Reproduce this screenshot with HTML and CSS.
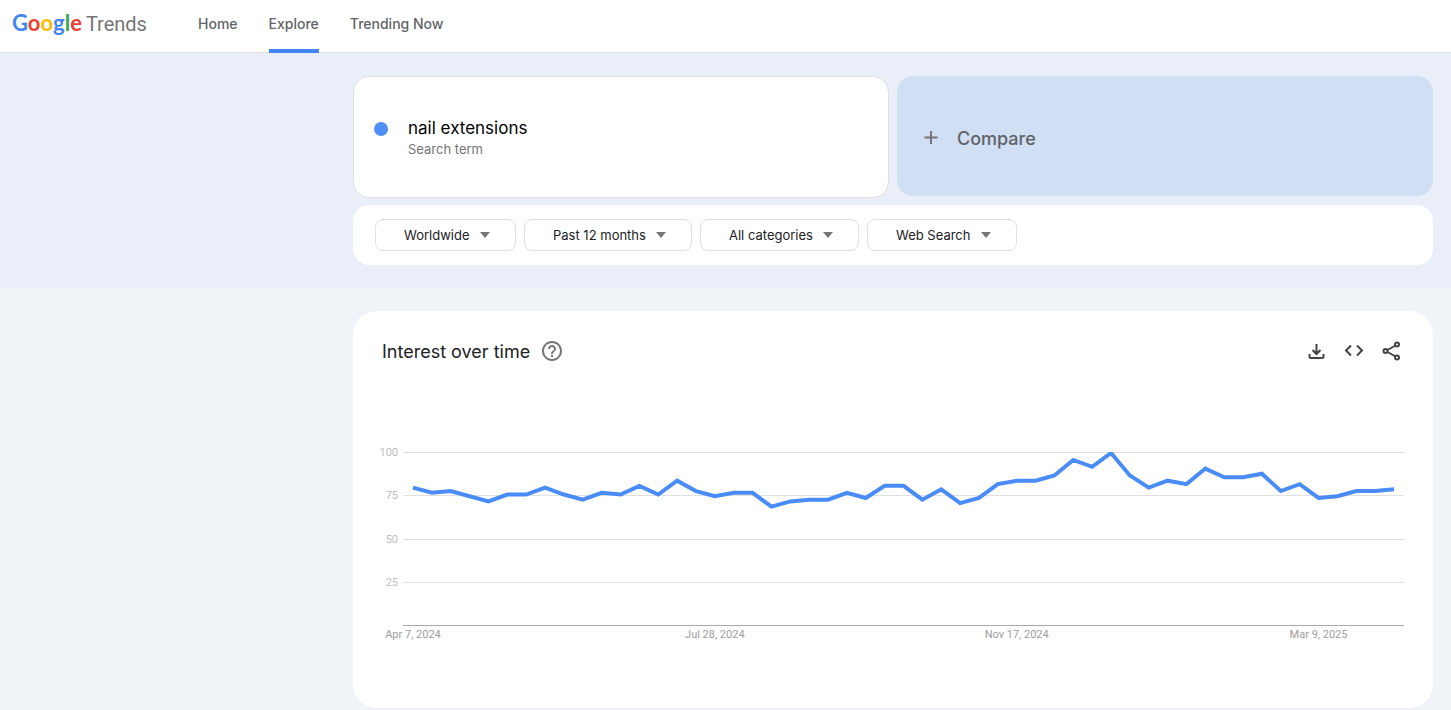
FILE: index.html
```html
<!DOCTYPE html>
<html lang="en">
<head>
  <meta charset="UTF-8">
  <meta name="viewport" content="width=device-width, initial-scale=1.0">
  <title>nail extensions - Explore - Google Trends</title>
  <link rel="stylesheet" href="styles.css">
</head>
<body>
  <header class="topbar">
    <a class="logo" href="#" aria-label="Google Trends">
      <span class="google"><span class="blue">G</span><span class="red">o</span><span class="yellow">o</span><span class="blue">g</span><span class="green">l</span><span class="red">e</span></span>
      <span class="trends">Trends</span>
    </a>
    <nav class="nav">
      <a href="#">Home</a>
      <a href="#" class="active">Explore</a>
      <a href="#">Trending Now</a>
    </nav>
  </header>

  <section class="hero">
    <div class="terms">
      <div class="term">
        <span class="dot"></span>
        <div>
          <div class="term-name">nail extensions</div>
          <div class="term-type">Search term</div>
        </div>
      </div>
      <button type="button" class="compare">
        <svg width="14" height="14" viewBox="0 0 14 14"><path d="M7 0v13M0.500 6.500h13" stroke="#757575" stroke-width="2"/></svg>
        Compare
      </button>
    </div>
    <div class="filters">
      <div class="filter">
        <select aria-label="Location"><option>Worldwide</option></select>
      </div>
      <div class="filter">
        <select aria-label="Time range"><option>Past 12 months</option></select>
      </div>
      <div class="filter">
        <select aria-label="Category"><option>All categories</option></select>
      </div>
      <div class="filter">
        <select aria-label="Search type"><option>Web Search</option></select>
      </div>
    </div>
  </section>

  <main class="content">
    <section class="card">
      <div class="card-header">
        <h2>Interest over time</h2>
        <button type="button" class="icon-btn help" aria-label="Help">
          <svg width="24" height="24" viewBox="0 0 24 24" fill="#757575"><path d="M11 18h2v-2h-2v2zm1-16C6.480 2 2 6.480 2 12s4.480 10 10 10 10-4.480 10-10S17.520 2 12 2zm0 18c-4.410 0-8-3.590-8-8s3.590-8 8-8 8 3.590 8 8-3.590 8-8 8zm0-14c-2.210 0-4 1.790-4 4h2c0-1.100.9-2 2-2s2 .9 2 2c0 2-3 1.750-3 5h2c0-2.250 3-2.500 3-5 0-2.210-1.790-4-4-4z"/></svg>
        </button>
        <div class="actions">
          <button type="button" class="icon-btn" aria-label="Download CSV">
            <svg width="24" height="24" viewBox="0 0 24 24" fill="none" stroke="#444" stroke-width="2"><path d="M12.500 5v10M8.500 11l4 4 4-4M5.500 15v2.500q0 1.500 1.500 1.500h11q1.500 0 1.500-1.500V15"/></svg>
          </button>
          <button type="button" class="icon-btn" aria-label="Embed">
            <svg width="24" height="24" viewBox="0 0 24 24" fill="none" stroke="#444" stroke-width="2"><path d="M9 6.500L4 11.500l5 5M15 6.500l5 5-5 5"/></svg>
          </button>
          <button type="button" class="icon-btn" aria-label="Share">
            <svg width="24" height="24" viewBox="0 0 24 24" fill="none" stroke="#444" stroke-width="2"><circle cx="5.500" cy="12" r="2"/><circle cx="17" cy="5.500" r="2"/><circle cx="17" cy="18.500" r="2"/><path d="M7.500 11l8-4.500M7.500 13l8 4.500"/></svg>
          </button>
        </div>
      </div>
      <svg class="chart" viewBox="0 0 1032 210" role="img" aria-label="Interest over time for nail extensions">
        <defs>
          <clipPath id="plot"><rect x="26" y="12" width="1001" height="174"/></clipPath>
        </defs>
        <g id="grid"></g>
        <g id="dates"></g>
        <polyline id="line" clip-path="url(#plot)"/>
      </svg>
    </section>
  </main>

  <script>
    const values = [
      80, 77, 78, 75, 72, 76, 76, 80, 76, 73, 77, 76, 81, 76, 84, 78, 75, 77,
      77, 69, 72, 73, 73, 77, 74, 81, 81, 73, 79, 71, 74, 82, 84, 84, 87, 96,
      92, 100, 87, 80, 84, 82, 91, 86, 86, 88, 78, 82, 74, 75, 78, 78, 79
    ];
    const labels = { 0: 'Apr 7, 2024', 16: 'Jul 28, 2024', 32: 'Nov 17, 2024', 48: 'Mar 9, 2025' };

    const plot = { left: 36, right: 1017, top: 13, bottom: 186 };
    const xPos = (i) => plot.left + i * (plot.right - plot.left) / (values.length - 1);
    const yPos = (v) => plot.bottom - v * (plot.bottom - plot.top) / 100;

    let grid = '';
    [100, 75, 50, 25, 0].forEach((v) => {
      const y = Math.round(yPos(v)) - 1;
      grid += `<rect class="${v ? 'grid-line' : 'base-line'}" x="26" y="${y}" width="1001" height="1"/>`;
      if (v) grid += `<text class="value" x="21" y="${y + 4}">${v}</text>`;
    });
    document.getElementById('grid').innerHTML = grid;

    document.getElementById('dates').innerHTML = Object.keys(labels)
      .map((i) => `<text class="date" x="${xPos(i)}" y="198">${labels[i]}</text>`)
      .join('');

    document.getElementById('line').setAttribute('points',
      values.map((v, i) => `${xPos(i)},${yPos(v)}`).join(' '));
  </script>
</body>
</html>
```
FILE: styles.css
```css
* {
  box-sizing: border-box;
}
body {
  margin: 0;
  font-family: Inter, 'Liberation Sans', sans-serif;
  font-size: 13px;
  background: #f0f4f9;
  color: #202124;
}
button {
  font-family: inherit;
  border: none;
  cursor: pointer;
}
.topbar {
  display: flex;
  height: 53px;
  padding: 0 12px;
  background: #fff;
  border-bottom: 1px solid #e0e0e0;
}
.logo {
  display: flex;
  align-items: baseline;
  gap: 4px;
  width: 186px;
  padding-top: 8px;
  line-height: 30px;
  text-decoration: none;
}
.google {
  font-family: Lato, sans-serif;
  font-size: 22px;
  font-weight: bold;
}
.trends {
  font-family: Roboto, sans-serif;
  font-size: 20px;
  color: #757575;
}
.blue { color: #4285f4; }
.red { color: #ea4335; }
.yellow { color: #fbbc05; }
.green { color: #34a853; }
.nav {
  display: flex;
  gap: 31px;
  font-size: 14px;
}
.nav a {
  height: 53px;
  line-height: 48px;
  font-weight: 500;
  color: #5f6368;
  text-decoration: none;
}
.nav .active {
  background: linear-gradient(#4285f4, #4285f4) bottom / 100% 4px no-repeat;
}
.hero {
  padding: 23px 18px 23px 353px;
  background: #e9eef8;
}
.terms {
  display: grid;
  grid-template-columns: 1fr 1fr;
  align-items: start;
  gap: 8px;
}
.term {
  display: flex;
  align-items: center;
  gap: 20px;
  height: 122px;
  padding: 2px 20px 0;
  background: #fff;
  border: 1px solid #e0e0e0;
  border-radius: 16px;
}
.dot {
  width: 14px;
  height: 14px;
  margin-bottom: 18px;
  border-radius: 50%;
  background: #4f8ff7;
}
.term-name {
  font-size: 17px;
  line-height: 22px;
  color: #000;
}
.term-type {
  line-height: 20px;
  color: #757575;
}
.compare {
  display: flex;
  align-items: center;
  gap: 19px;
  height: 120px;
  padding: 4px 27px 0;
  font-size: 18px;
  font-weight: 500;
  color: #5f6368;
  background: #d0dff4;
  border-radius: 16px;
}
.filters {
  display: flex;
  gap: 8px;
  margin-top: 7px;
  padding: 14px 22px;
  background: #fff;
  border-radius: 16px;
}
.filter {
  position: relative;
}
.filter select {
  display: block;
  height: 32px;
  padding: 0 45px 0 28px;
  font: inherit;
  color: #202124;
  background: #fff;
  border: 1px solid #e0e0e0;
  border-radius: 8px;
  appearance: none;
}
.filter::after {
  content: '';
  position: absolute;
  top: 13px;
  right: 26px;
  border: 5px solid transparent;
  border-top: 6px solid #757575;
  border-bottom: none;
  pointer-events: none;
}
.content {
  padding: 23px 18px 0 353px;
}
.card {
  padding: 28px 24px 58px;
  background: #fff;
  border-radius: 24px;
}
.card-header {
  display: flex;
  align-items: center;
  height: 24px;
  padding: 0 5px;
}
.card-header h2 {
  margin: 0;
  font-size: 18px;
  font-weight: normal;
}
.icon-btn {
  display: block;
  width: 24px;
  height: 24px;
  padding: 0;
  background: none;
}
.help {
  margin-left: 10px;
}
.actions {
  display: flex;
  gap: 14px;
  margin-left: auto;
}
.chart {
  display: block;
  width: 100%;
  margin-top: 77px;
  font-family: Roboto, sans-serif;
  font-size: 11px;
}
.grid-line {
  fill: #e0e0e0;
}
.base-line {
  fill: #aaa;
}
.value {
  fill: #bdbdbd;
  text-anchor: end;
}
.date {
  fill: #9e9e9e;
  text-anchor: middle;
}
#line {
  fill: none;
  stroke: #4a8cf7;
  stroke-width: 4;
}
```
